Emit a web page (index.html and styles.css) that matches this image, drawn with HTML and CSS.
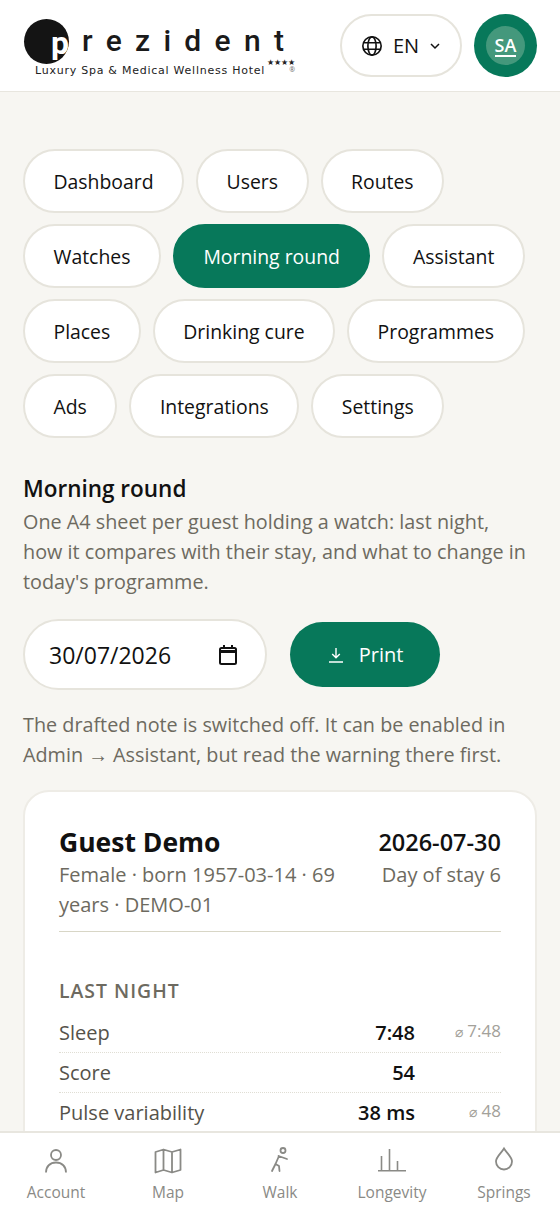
FILE: index.html
```html
<!doctype html>
<html lang="en">
  <head>
    <meta charset="utf-8" />
    <title>Prezident - Morning round</title>
    <link rel="stylesheet" href="styles.css">
  </head>
  <body>
    <div id="topBar">
      <div class="logo">
        <div class="logoMark">
          <span class="logoBall"><span class="logoP">p</span></span>
          <span class="logoWord">rezident</span>
        </div>
        <div class="logoLine">
          <span class="logoTag">Luxury Spa &amp; Medical Wellness Hotel</span>
          <span class="logoStars">★★★★<small>®</small></span>
        </div>
      </div>
      <div class="topRight">
        <button class="langBtn">
          <svg width="22" height="22" viewBox="0 0 24 24" fill="none" stroke="#111" stroke-width="1.800"><circle cx="12" cy="12" r="10"/><ellipse cx="12" cy="12" rx="4.500" ry="10"/><path d="M2.600 8.500h18.800M2.600 15.500h18.800"/></svg>
          <span>EN</span>
          <svg width="12" height="12" viewBox="0 0 12 12" fill="none" stroke="#111" stroke-width="1.500"><path d="M2 4l4 4 4-4"/></svg>
        </button>
        <div class="avatar"><span class="avatarIn"><span class="avatarText">SA</span></span></div>
      </div>
    </div>

    <div id="main">
      <div class="tabs">
        <a class="tab">Dashboard</a>
        <a class="tab">Users</a>
        <a class="tab">Routes</a>
        <a class="tab">Watches</a>
        <a class="tab active">Morning round</a>
        <a class="tab">Assistant</a>
        <a class="tab">Places</a>
        <a class="tab">Drinking cure</a>
        <a class="tab">Programmes</a>
        <a class="tab">Ads</a>
        <a class="tab">Integrations</a>
        <a class="tab">Settings</a>
      </div>

      <h2>Morning round</h2>
      <p class="muted lede">One A4 sheet per guest holding a watch: last night, how it compares with their stay, and what to change in today's programme.</p>

      <div class="actions">
        <div class="dateBox">
          <span>30/07/2026</span>
          <svg width="24" height="24" viewBox="0 0 24 24" fill="none" stroke="#111" stroke-width="2"><rect x="4" y="5" width="16" height="16" rx="1.500"/><path d="M4 8.500h16" stroke-width="3"/><path d="M8 2v4M16 2v4"/></svg>
        </div>
        <button class="printBtn">
          <svg width="18" height="18" viewBox="0 0 18 18" fill="none" stroke="#fff" stroke-width="1.400"><path d="M9 2v9.500M5.200 8l3.800 3.800L12.800 8M2 16h14"/></svg>
          Print
        </button>
      </div>

      <p class="muted note">The drafted note is switched off. It can be enabled in Admin → Assistant, but read the warning there first.</p>

      <div class="sheet">
        <div class="sheetHead">
          <div class="guest">
            <div class="guestName">Guest Demo</div>
            <div class="sheetSub">Female · born 1957-03-14 · 69 years · DEMO-01</div>
          </div>
          <div class="stay">
            <div class="stayDate">2026-07-30</div>
            <div class="sheetSub">Day of stay 6</div>
          </div>
        </div>
        <div class="sectionTitle">LAST NIGHT</div>
        <div class="row"><span class="rowLabel">Sleep</span><span class="rowVal">7:48</span><span class="rowAvg"><small>⌀</small> 7:48</span></div>
        <div class="row"><span class="rowLabel">Score</span><span class="rowVal">54</span><span class="rowAvg"></span></div>
        <div class="row"><span class="rowLabel">Pulse variability</span><span class="rowVal">38 ms</span><span class="rowAvg"><small>⌀</small> 48</span></div>
      </div>
    </div>

    <div id="bottomNav">
      <a class="navItem">
        <svg width="30" height="30" viewBox="0 0 30 30" fill="none" stroke="#8a8a86" stroke-width="1.800"><circle cx="15" cy="9" r="5"/><path d="M5 26.500c0-6 4-10 10-10s10 4 10 10"/></svg>
        <span>Account</span>
      </a>
      <a class="navItem">
        <svg width="30" height="30" viewBox="0 0 30 30" fill="none" stroke="#8a8a86" stroke-width="1.800" stroke-linejoin="round"><path d="M2.500 6l8-2.500L19 6l8.500-2.500V24L19 26.500 10.500 24l-8 2.500zM10.500 3.500V24M19 6v20.500"/></svg>
        <span>Map</span>
      </a>
      <a class="navItem">
        <svg width="30" height="30" viewBox="0 0 30 30" fill="none" stroke="#8a8a86" stroke-width="1.800" stroke-linecap="round" stroke-linejoin="round"><circle cx="18" cy="4.500" r="2.500"/><path d="M13.500 10l8.500 3M14 10l-3.500 8L7 25M10.500 18l3.500 2 .5 5"/></svg>
        <span>Walk</span>
      </a>
      <a class="navItem">
        <svg width="30" height="30" viewBox="0 0 30 30" fill="none" stroke="#8a8a86" stroke-width="1.600"><path d="M1 24.700h28M4.500 24.700V10M12.500 24.700V3M20.500 24.700V15"/></svg>
        <span>Longevity</span>
      </a>
      <a class="navItem">
        <svg width="30" height="30" viewBox="0 0 30 30" fill="none" stroke="#8a8a86" stroke-width="1.800"><path d="M15 2.500c3 5 8 8.500 8 13a8 8 0 0 1-16 0c0-4.500 5-8 8-13z"/></svg>
        <span>Springs</span>
      </a>
    </div>
  </body>
</html>
```

FILE: styles.css
```css
* {
  box-sizing: border-box;
}
body {
  margin: 0;
  height: 1212px;
  overflow: hidden;
  display: flex;
  flex-direction: column;
  background: #f7f6f2;
  color: #111;
  font-family: "Open Sans", "Noto Sans", sans-serif;
  font-size: 20px;
}
/* Top bar */
#topBar {
  flex: none;
  height: 92px;
  padding: 0 23px 0 24px;
  background: #fff;
  border-bottom: 1px solid #e8e6df;
  display: flex;
  align-items: center;
  justify-content: space-between;
}
.logo {
  width: 272px;
  margin-top: 5px;
}
.logoMark {
  display: flex;
  height: 45px;
}
.logoBall {
  flex: none;
  width: 45px;
  height: 45px;
  border-radius: 50%;
  background: #141414;
  overflow: hidden;
  text-align: right;
}
.logoP {
  display: block;
  font-family: Roboto, sans-serif;
  font-size: 32px;
  font-weight: 700;
  line-height: 45px;
  margin-top: 2px;
  color: #fff;
}
.logoWord {
  height: 30px;
  margin: 7px 0 0 13px;
  font-family: Roboto, sans-serif;
  font-size: 30px;
  font-weight: 500;
  line-height: 30px;
  letter-spacing: 13.300px;
  color: #1a1a1a;
  white-space: nowrap;
}
.logoLine {
  display: flex;
  align-items: flex-start;
  margin: 0 0 0 11px;
  white-space: nowrap;
}
.logoTag {
  font-family: "DejaVu Sans", sans-serif;
  font-size: 11px;
  line-height: 13px;
  letter-spacing: 0.750px;
  color: #222;
}
.logoStars {
  display: flex;
  flex-direction: column;
  align-items: flex-end;
  margin: -7px 0 0 2px;
  font-size: 8px;
  line-height: 9px;
  color: #222;
}
.logoStars small {
  font-size: 7px;
  line-height: 7px;
  color: #666;
}
.topRight {
  display: flex;
  align-items: center;
  gap: 12px;
}
button {
  font-family: inherit;
}
.langBtn {
  height: 63px;
  width: 122px;
  display: flex;
  align-items: center;
  justify-content: center;
  gap: 10px;
  background: #fff;
  border: 2px solid #e6e4dc;
  border-radius: 32px;
  font-size: 20px;
  color: #111;
}
.avatar {
  width: 63px;
  height: 63px;
  border-radius: 50%;
  background: #07785a;
  display: flex;
  align-items: center;
  justify-content: center;
}
.avatarIn {
  width: 39px;
  height: 39px;
  border-radius: 50%;
  background: #44987c;
  display: flex;
  align-items: center;
  justify-content: center;
}
.avatarText {
  color: #fff;
  font-size: 18px;
  font-weight: 600;
  line-height: 20px;
  border-bottom: 2px solid #fff;
}
/* Main */
#main {
  flex: 1;
  min-height: 0;
  overflow: hidden;
  padding: 57px 23px 0;
}
.tabs {
  display: flex;
  flex-wrap: wrap;
  column-gap: 12px;
  row-gap: 11px;
  margin-bottom: 36px;
}
.tab {
  height: 64px;
  padding: 0 28.500px;
  display: flex;
  align-items: center;
  background: #fff;
  border: 2px solid #e6e4dc;
  border-radius: 32px;
  font-size: 19.400px;
}
.tab.active {
  background: #07785a;
  border-color: #07785a;
  color: #fff;
}
h2 {
  margin: 0 0 3px;
  font-size: 22.500px;
  font-weight: 600;
  line-height: 30px;
}
p {
  margin: 0;
}
.muted {
  color: #6d6a60;
  font-size: 19.800px;
  line-height: 30px;
}
.lede {
  max-width: 508px;
}
.actions {
  display: flex;
  align-items: center;
  gap: 23px;
  margin: 22px 0 20px;
}
.dateBox {
  width: 244px;
  height: 71px;
  padding: 0 25px 0 24px;
  display: flex;
  align-items: center;
  justify-content: space-between;
  background: #fff;
  border: 2px solid #e6e4dc;
  border-radius: 36px;
  font-size: 23px;
}
.printBtn {
  width: 150px;
  height: 65px;
  display: flex;
  align-items: center;
  justify-content: center;
  gap: 14px;
  background: #07785a;
  color: #fff;
  border: none;
  border-radius: 33px;
  font-size: 20px;
}
.note {
  margin-bottom: 20px;
}
.sheet {
  height: 600px;
  padding: 33px 34px 0;
  background: #fff;
  border: 2px solid #eeece6;
  border-radius: 26px;
}
.sheetHead {
  display: flex;
  justify-content: space-between;
  gap: 28px;
  padding-bottom: 11px;
  border-bottom: 1px solid #d8d6c6;
  margin-bottom: 44px;
}
.guestName {
  font-size: 26.500px;
  font-weight: 700;
  line-height: 34px;
}
.sheetSub {
  color: #6d6a60;
  font-size: 20px;
  line-height: 30px;
  margin-top: 1px;
}
.stay {
  flex: none;
  text-align: right;
}
.stayDate {
  font-size: 23.500px;
  font-weight: 600;
  line-height: 34px;
}
.sectionTitle {
  color: #6d6a60;
  font-size: 19.400px;
  font-weight: 600;
  letter-spacing: 1px;
  line-height: 30px;
  margin-bottom: 7px;
}
.row {
  height: 40px;
  display: flex;
  align-items: center;
  border-bottom: 1px dotted #e0ded4;
}
.rowLabel {
  flex: 1;
  color: #55524a;
}
.rowVal {
  font-weight: 600;
}
.rowAvg {
  width: 86px;
  text-align: right;
  font-size: 17px;
  color: #a3a19a;
  margin-top: -4px;
}
.rowAvg small {
  font-size: 14px;
}
/* Bottom nav */
#bottomNav {
  flex: none;
  height: 81px;
  background: #fff;
  border-top: 2px solid #e8e6df;
  display: flex;
  padding-top: 13px;
}
.navItem {
  flex: 1;
  display: flex;
  flex-direction: column;
  align-items: center;
  gap: 6px;
  color: #8a8a86;
  font-size: 15.500px;
  line-height: 20px;
}
```
